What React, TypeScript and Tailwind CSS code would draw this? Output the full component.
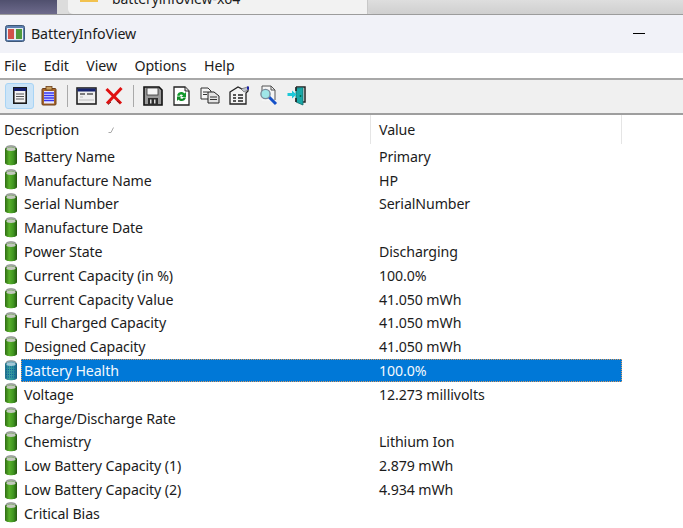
const rows: [string, string][] = [
  ["Battery Name", "Primary"],
  ["Manufacture Name", "HP"],
  ["Serial Number", "SerialNumber"],
  ["Manufacture Date", ""],
  ["Power State", "Discharging"],
  ["Current Capacity (in %)", "100.0%"],
  ["Current Capacity Value", "41.050 mWh"],
  ["Full Charged Capacity", "41.050 mWh"],
  ["Designed Capacity", "41.050 mWh"],
  ["Battery Health", "100.0%"],
  ["Voltage", "12.273 millivolts"],
  ["Charge/Discharge Rate", ""],
  ["Chemistry", "Lithium Ion"],
  ["Low Battery Capacity (1)", "2.879 mWh"],
  ["Low Battery Capacity (2)", "4.934 mWh"],
  ["Critical Bias", ""],
];

function Battery({ selected }: { selected?: boolean }) {
  const id = selected ? "bs" : "bn";
  return (
    <svg width="14" height="21" viewBox="0 0 14 21" className="shrink-0">
      <defs>
        <linearGradient id={id} x1="0" x2="1" y1="0" y2="0">
          <stop offset="0" stopColor={selected ? "#1f6f8a" : "#2f6d14"} />
          <stop offset="0.35" stopColor={selected ? "#3aa0a0" : "#58b02a"} />
          <stop offset="0.7" stopColor={selected ? "#2b8f9a" : "#3f9420"} />
          <stop offset="1" stopColor={selected ? "#155a80" : "#24570f"} />
        </linearGradient>
      </defs>
      <ellipse cx="7" cy="3.4" rx="5.2" ry="2.6" fill={selected ? "#8fb4c8" : "#b5b9b2"} stroke="#6d7570" strokeWidth="0.8" />
      <path d="M1 4 C1 2 13 2 13 4 L13 18 C13 21 1 21 1 18 Z" fill={`url(#${id})`} />
      <ellipse cx="7" cy="4.2" rx="4.6" ry="1.7" fill={selected ? "#a5c8d8" : "#c4c8bf"} />
      {selected && <path d="M2 7h10M2 9.5h10M2 12h10M2 14.5h10M2 17h10" stroke="#0f5f9f" strokeWidth="1" strokeDasharray="1 1" />}
    </svg>
  );
}

function AppIcon() {
  return (
    <svg width="20" height="17" viewBox="0 0 20 17">
      <rect x="0.5" y="0.5" width="19" height="16" rx="2" fill="#5c7fb0" stroke="#3f5878" />
      <rect x="2" y="3" width="16" height="12" fill="#e8edf2" />
      <rect x="3" y="4" width="6" height="10" fill="#d2524a" />
      <rect x="11" y="4" width="6" height="10" fill="#4f9a3c" />
    </svg>
  );
}

function Report() {
  return (
    <svg width="14" height="17" viewBox="0 0 14 17">
      <rect x="0.8" y="0.8" width="12.4" height="15.4" fill="#f2f2f2" stroke="#1a1a1a" strokeWidth="1.6" />
      <rect x="1" y="1" width="12" height="3" fill="#16206e" />
      <path d="M3 7h8M3 9.5h8M3 12h8" stroke="#555" strokeWidth="1.2" />
    </svg>
  );
}

function Clipboard() {
  return (
    <svg width="16" height="20" viewBox="0 0 16 20">
      <rect x="1" y="2.5" width="14" height="16.5" rx="1" fill="#a8662a" stroke="#6d3f18" />
      <rect x="3" y="5" width="10" height="12.5" fill="#e8e8ff" />
      <path d="M3 7h10M3 9.5h10M3 12h10M3 14.5h10" stroke="#3535ee" strokeWidth="1.6" />
      <rect x="5" y="0.5" width="6" height="3.5" fill="#c8a060" stroke="#6d3f18" strokeWidth="0.8" />
    </svg>
  );
}

function WindowIcon() {
  return (
    <svg width="21" height="18" viewBox="0 0 21 18">
      <rect x="1" y="1" width="19" height="16" fill="#efefef" stroke="#222" strokeWidth="1.6" />
      <rect x="1.5" y="1.5" width="18" height="3" fill="#17246e" />
      <path d="M4 7h5M11 7h6" stroke="#555" strokeWidth="1.6" />
      <path d="M4 10h3M3 13h15" stroke="#bbb" strokeWidth="1" />
    </svg>
  );
}

function RedX() {
  return (
    <svg width="18" height="18" viewBox="0 0 18 18">
      <path d="M1.5 2 L16 16.5" stroke="#e01010" strokeWidth="3" />
      <path d="M16.5 1 L2 16.5" stroke="#e01010" strokeWidth="3" />
      <path d="M6 15 L3 17.5 M15 16 L12 14" stroke="#702020" strokeWidth="1" />
    </svg>
  );
}

function Floppy() {
  return (
    <svg width="20" height="20" viewBox="0 0 20 20">
      <path d="M1 1 H16 L19 4 V19 H1 Z" fill="#9a9a9a" stroke="#111" strokeWidth="1.6" />
      <rect x="4" y="2" width="11" height="7" fill="#f5f5f5" stroke="#333" strokeWidth="0.8" />
      <rect x="5" y="12" width="10" height="7" fill="#2e2e2e" />
      <rect x="7" y="13.5" width="1.5" height="4" fill="#ddd" />
      <rect x="11" y="13.5" width="1.5" height="4" fill="#ddd" />
    </svg>
  );
}

function Refresh() {
  return (
    <svg width="17" height="20" viewBox="0 0 17 20">
      <path d="M1 1 H12 L16 5 V19 H1 Z" fill="#fff" stroke="#222" strokeWidth="1.3" />
      <path d="M12 1 V5 H16" fill="#ddd" stroke="#222" />
      <path d="M4 9.5 C5 5.5 9.5 5 11.5 7.5 L13 6 V11 H8.5 L10 9.3 C8.7 8 7 8.3 6.5 10 Z" fill="#129a2c" />
      <path d="M13 11.5 C12 15.5 7.5 16 5.5 13.5 L4 15 V10.5 H8.5 L7 12 C8.3 13.2 10 13 10.5 11.5 Z" fill="#0f8a26" />
    </svg>
  );
}

function Copy() {
  return (
    <svg width="20" height="17" viewBox="0 0 20 17">
      <path d="M1 1 H8 L11 4 V12 H1 Z" fill="#f5f5f5" stroke="#333" />
      <path d="M8 5 H14 L19 9 V16 H8 Z" fill="#e4e4e4" stroke="#222" />
      <path d="M3 5h5M3 7.5h4M10 10h7M10 12.5h7" stroke="#333" />
    </svg>
  );
}

function Props() {
  return (
    <svg width="20" height="19" viewBox="0 0 20 19">
      <path d="M1 6 L9 1 L15 4 L19 2 V5 L17 7 V18 H1 Z" fill="#f4f4f4" stroke="#222" strokeWidth="1.3" />
      <path d="M12 3 L19 0.8 V4 L15 6 Z" fill="#bfc3cc" stroke="#555" strokeWidth="0.6" />
      <rect x="18" y="0.5" width="2" height="3" fill="#1a22a8" />
      <path d="M4 9h3M9 9h5M4 12h3M9 12h5M4 15h3M9 15h5" stroke="#222" strokeWidth="1.3" />
    </svg>
  );
}

function Find() {
  return (
    <svg width="19" height="21" viewBox="0 0 19 21">
      <path d="M3 2 H12 V6 H15.5 V16 H3 Z" fill="#f5f5f5" />
      <path d="M3 1 H12 L16 5 V15" fill="none" stroke="#555" />
      <path d="M3 1 V6 M12 1 V5 H16" fill="none" stroke="#555" />
      <path d="M10 12 L17 19" stroke="#1450c8" strokeWidth="3" />
      <circle cx="6.5" cy="9" r="4.6" fill="#9fe6e8" stroke="#7a8a9a" strokeWidth="1.4" />
    </svg>
  );
}

function ExitDoor() {
  return (
    <svg width="20" height="20" viewBox="0 0 20 20">
      <path d="M9 1 H18 V16 H16" fill="none" stroke="#222" strokeWidth="1.5" />
      <path d="M9 2 L16 1.5 V19 L9 16 Z" fill="#18a8a8" stroke="#0f6a6a" strokeWidth="0.8" />
      <path d="M9 1 V5 M9 12 V16" stroke="#222" strokeWidth="1.6" />
      <path d="M0.5 7 H5 V4.5 L9.5 8.5 L5 12.5 V10 H0.5 Z" fill="#1cc8d8" />
      <circle cx="13.5" cy="10" r="0.9" fill="#064" />
    </svg>
  );
}

function Sep() {
  return <div className="w-px h-[22px] bg-[#a9a9a9] mx-[5px]" />;
}

export default function App() {
  return (
    <div className="w-[683px] h-[528px] overflow-hidden bg-white text-[#1c1c1c] text-[14.2px] font-['Noto_Sans','Open_Sans',sans-serif] tracking-[-0.1px]">
      <div className="flex h-[15px] overflow-hidden bg-[#d6d6d6] border-b border-[#9c9c9c]">
        <div className="w-[57px] bg-gradient-to-b from-[#50506e] to-[#6d6a8c]" />
        <div className="w-[11px] bg-[#dcdcdc]" />
        <div className="w-[300px] bg-[#f2f2f2] rounded-bl-[5px] border-r border-[#c8c8c8] flex items-end pl-[12px] gap-[14px] overflow-hidden">
          <div className="w-[18px] h-[3px] mb-[12px] bg-[#f2c24f]" />
          <span className="text-[14px] leading-[18px] mb-[6px] shrink-0">batteryinfoview-x64</span>
        </div>
        <div className="flex-1 bg-gradient-to-b from-[#dedede] to-[#cfcfcf] rounded-bl-[5px]" />
      </div>

      <div className="flex items-center justify-between h-[38px] bg-[#f1f2f8] pl-[5px]">
        <div className="flex items-center gap-[6px]">
          <AppIcon />
          <span>BatteryInfoView</span>
        </div>
        <div className="w-[12px] h-px bg-black mr-[38px] mb-[1px]" />
      </div>

      <div className="flex items-center h-[25px] bg-white pl-[4px] gap-[17.5px]">
        <span>File</span>
        <span>Edit</span>
        <span>View</span>
        <span>Options</span>
        <span>Help</span>
      </div>

      <div className="h-[2px] bg-[#a8a8a8]" />

      <div className="flex items-center h-[35px] bg-[#f0f0f0] border-b-2 border-[#9e9e9e] pl-[5px] pb-[2px]">
        <div className="flex items-center justify-center w-[29px] h-[26px] bg-[#cce4f7] border border-[#a8d4f5] rounded-[3px] mr-[2px]">
          <Report />
        </div>
        <div className="flex items-center justify-center w-[26px]"><Clipboard /></div>
        <Sep />
        <div className="flex items-center justify-center w-[26px]"><WindowIcon /></div>
        <div className="flex items-center justify-center w-[29px]"><RedX /></div>
        <Sep />
        <div className="flex items-center justify-center w-[28px]"><Floppy /></div>
        <div className="flex items-center justify-center w-[28px]"><Refresh /></div>
        <div className="flex items-center justify-center w-[30px]"><Copy /></div>
        <div className="flex items-center justify-center w-[28px]"><Props /></div>
        <div className="flex items-center justify-center w-[30px]"><Find /></div>
        <div className="flex items-center justify-center w-[28px]"><ExitDoor /></div>
      </div>

      <div className="flex h-[29px] bg-white">
        <div className="w-[371px] flex items-center pl-[4px] pt-[1px] border-r border-[#e5e5e5] gap-[29px]">
          <span>Description</span>
          <svg width="6" height="6" viewBox="0 0 6 6"><path d="M0.5 5.5 H3 L5.5 0.5" fill="none" stroke="#a8a8a8" /></svg>
        </div>
        <div className="w-[251px] flex items-center pl-[8px] pt-[1px] border-r border-[#e5e5e5]">
          <span>Value</span>
        </div>
      </div>

      <div className="w-[622px]">
        {rows.map(([name, value]) => {
          const selected = name === "Battery Health";
          return (
            <div key={name} className="flex items-center h-[23.8px]">
              <div className="w-[21px] pl-[4px] flex items-center shrink-0"><Battery selected={selected} /></div>
              <div className={selected ? "flex-1 flex items-center h-[23px] pt-[1px] bg-[#0078d7] text-[#f4f8fc] outline-1 -outline-offset-1 outline-dotted outline-[#d89a60]" : "flex-1 flex items-center h-[23px] pt-[1px]"}>
                <span className="w-[358px] pl-[3px] shrink-0">{name}</span>
                <span>{value}</span>
              </div>
            </div>
          );
        })}
      </div>
    </div>
  );
}
